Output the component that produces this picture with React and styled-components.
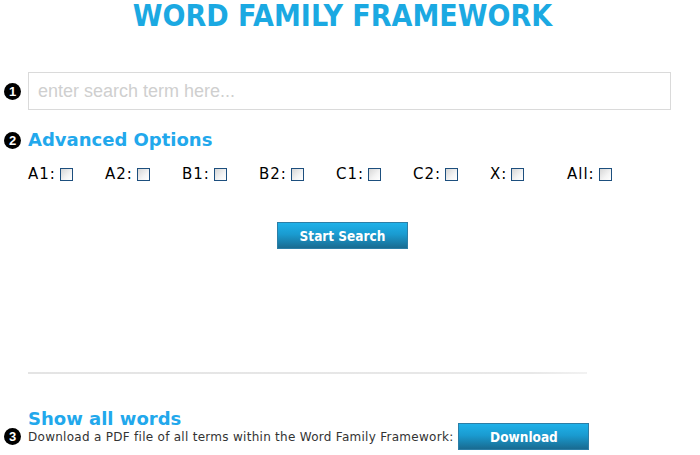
import React from "react";
import styled, { createGlobalStyle } from "styled-components";

const GlobalStyle = createGlobalStyle`
  html, body { margin: 0; padding: 0; background: #fff; }
  body { font-family: "DejaVu Sans", Verdana, sans-serif; color: #000; }
`;

const Page = styled.div`
  width: 685px;
  display: flex;
  flex-direction: column;
`;

const Title = styled.h1`
  margin: 0;
  padding-top: 1px;
  text-align: center;
  font-family: "DejaVu Sans Condensed", "DejaVu Sans", sans-serif;
  font-stretch: condensed;
  font-weight: bold;
  font-size: 30px;
  line-height: 29px;
  color: #1ba9e2;
`;

const Step = styled.div`
  display: grid;
  grid-template-columns: 28px 1fr;
  align-items: center;
  margin-top: ${(p) => p.$top || 0}px;
`;

const Badge = styled.span`
  margin-left: 4px;
  width: 17px;
  height: 17px;
  border-radius: 50%;
  background: #000;
  color: #fff;
  font-family: "Liberation Sans", Arial, sans-serif;
  font-weight: bold;
  font-size: 13px;
  line-height: 17px;
  text-align: center;
`;

const SearchInput = styled.input`
  box-sizing: border-box;
  width: 643px;
  height: 38px;
  border: 1px solid #dadada;
  padding: 0 9px;
  font-family: "Liberation Sans", Arial, sans-serif;
  font-size: 18px;
  color: #333;
  outline: none;
  &::placeholder { color: #cfcfcf; }
`;

const Heading = styled.h2`
  margin: 0;
  font-family: "DejaVu Sans", Verdana, sans-serif;
  font-weight: bold;
  font-size: 18px;
  line-height: ${(p) => p.$lh || 22}px;
  color: #22a8ec;
  padding-left: ${(p) => p.$indent || 0}px;
  margin-top: ${(p) => p.$top || 0}px;
`;

const Levels = styled.div`
  margin-top: 15px;
  padding-left: 28px;
  display: grid;
  grid-template-columns: repeat(8, 77px);
`;

const Level = styled.label`
  display: flex;
  align-items: center;
  gap: 4px;
  font-size: 15px;
  line-height: 17px;
  letter-spacing: 1px;
  color: #000;
`;

const Check = styled.input.attrs({ type: "checkbox" })`
  appearance: none;
  margin: 0;
  width: 13px;
  height: 13px;
  box-sizing: border-box;
  border: 1px solid #1d4f7e;
  background: linear-gradient(135deg, #d6d6d6 0%, #f4f4f4 60%, #fff 100%);
`;

const ButtonRow = styled.div`
  margin-top: 39px;
  display: flex;
  justify-content: center;
`;

const BlueButton = styled.button`
  width: 131px;
  height: 27px;
  box-sizing: border-box;
  border: 1px solid #2c7ea6;
  background: linear-gradient(#1fb1e9, #1a9bd0 45%, #196b91);
  color: #fff;
  font-family: "DejaVu Sans Condensed", "DejaVu Sans", sans-serif;
  font-stretch: condensed;
  font-weight: bold;
  font-size: 13.5px;
  padding: 0;
  cursor: pointer;
`;

const Divider = styled.hr`
  margin: 123px 0 0 28px;
  width: 559px;
  height: 2px;
  border: none;
  background: linear-gradient(90deg, #e4e4e4, #e8e8e8 90%, #f2f2f2);
`;

const DescRow = styled.div`
  display: flex;
  align-items: center;
  gap: 5px;
`;

const Desc = styled.span`
  font-size: 12px;
  letter-spacing: 0.28px;
  color: #333;
`;

const levels = ["A1", "A2", "B1", "B2", "C1", "C2", "X", "All"];

export default function App() {
  return (
    <>
      <GlobalStyle />
      <Page>
        <Title>WORD FAMILY FRAMEWORK</Title>
        <Step $top={42}>
          <Badge>1</Badge>
          <SearchInput placeholder="enter search term here..." />
        </Step>
        <Step $top={19}>
          <Badge>2</Badge>
          <Heading>Advanced Options</Heading>
        </Step>
        <Levels>
          {levels.map((l) => (
            <Level key={l}>
              {l}:<Check />
            </Level>
          ))}
        </Levels>
        <ButtonRow>
          <BlueButton>Start Search</BlueButton>
        </ButtonRow>
        <Divider />
        <Heading $indent={28} $top={38} $lh={14}>
          Show all words
        </Heading>
        <Step $top={-3}>
          <Badge>3</Badge>
          <DescRow>
            <Desc>Download a PDF file of all terms within the Word Family Framework:</Desc>
            <BlueButton>Download</BlueButton>
          </DescRow>
        </Step>
      </Page>
    </>
  );
}
